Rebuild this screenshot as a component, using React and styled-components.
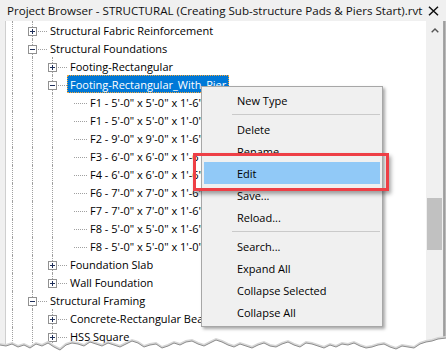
import styled, { createGlobalStyle } from 'styled-components';

const GlobalStyle = createGlobalStyle`
  html, body {
    margin: 0;
    padding: 0;
    background: #ffffff;
  }
  body {
    font-family: "Open Sans", "Noto Sans", sans-serif;
    font-size: 11px;
    color: #000;
  }
`;

const Window = styled.div`
  position: relative;
  width: 446px;
  height: 359px;
  overflow: hidden;
  background: #f0f0f0;
  display: flex;
  flex-direction: column;
`;

const TitleBar = styled.div`
  height: 21px;
  flex: none;
  display: flex;
  align-items: center;
  gap: 4px;
  padding: 0 7px;
  color: #111;
`;

const Title = styled.span`
  flex: 1;
  font-size: 11.6px;
  white-space: nowrap;
`;

const Body = styled.div`
  flex: 1;
  display: flex;
  min-height: 0;
`;

const LeftFrame = styled.div`
  width: 5px;
  flex: none;
  background: #f0f0f0;
  border-right: 1px solid #cfcfcf;
`;

const Tree = styled.div`
  flex: 1;
  background: #ffffff;
  overflow: hidden;
`;

const Scrollbar = styled.div`
  width: 17px;
  flex: none;
  background: #f0f0f0;
  display: flex;
  flex-direction: column;
  align-items: center;
`;

const ArrowButton = styled.div`
  height: 18px;
  width: 17px;
  display: flex;
  align-items: center;
  justify-content: center;
`;

const Thumb = styled.div`
  width: 15px;
  height: ${p => p.$height}px;
  margin-top: ${p => p.$top}px;
  background: #c1c1c1;
`;

const RightEdge = styled.div`
  width: 3px;
  flex: none;
  background: linear-gradient(to right, #a9a9a9, #9a9a9a 66%, #d8d8d8);
`;

const Row = styled.div`
  height: 18px;
  display: flex;
  white-space: nowrap;
`;

const Guide = styled.div`
  width: 20px;
  flex: none;
  position: relative;
  &::before {
    content: '';
    position: absolute;
    left: 6px;
    top: 0;
    bottom: 0;
    border-left: 1px dotted #a0a0a0;
    display: ${p => (p.$on ? 'block' : 'none')};
  }
`;

const Connector = styled.div`
  width: 21px;
  flex: none;
  position: relative;
  &::before {
    content: '';
    position: absolute;
    left: 6px;
    top: 0;
    height: ${p => (p.$kind === 'end' ? '10px' : '18px')};
    border-left: 1px dotted #a0a0a0;
    display: ${p => (p.$kind === 'none' ? 'none' : 'block')};
  }
  &::after {
    content: '';
    position: absolute;
    left: 8px;
    right: 0;
    top: 10px;
    border-top: 1px dotted #a0a0a0;
  }
`;

const Expander = styled.span`
  position: absolute;
  left: 2px;
  top: 6px;
  width: 9px;
  height: 9px;
  box-sizing: border-box;
  border: 1px solid #919191;
  background: #ffffff;
  z-index: 1;
  &::before {
    content: '';
    position: absolute;
    left: 1px;
    top: 3px;
    width: 5px;
    height: 1px;
    background: #1f2f5a;
  }
  &::after {
    content: '';
    position: absolute;
    left: 3px;
    top: 1px;
    width: 1px;
    height: 5px;
    background: #1f2f5a;
    display: ${p => (p.$open ? 'none' : 'block')};
  }
`;

const Label = styled.span`
  display: flex;
  align-items: center;
  height: 18px;
  padding: 0 3px;
  box-sizing: border-box;
  background: ${p => (p.$selected ? '#0078d7' : 'transparent')};
  color: ${p => (p.$selected ? '#ffffff' : '#000000')};
  outline: ${p => (p.$selected ? '1px dotted #f7a83a' : 'none')};
  outline-offset: -1px;
`;

const Menu = styled.div`
  position: absolute;
  left: 201px;
  top: 86px;
  width: 182px;
  box-sizing: border-box;
  padding: 2px 0 3px;
  background: #f0f0f0;
  border: 1px solid #a7a7a7;
  box-shadow: 2px 2px 3px rgba(0, 0, 0, 0.35);
  z-index: 5;
`;

const MenuItem = styled.div`
  height: 22px;
  margin: 0 2px;
  padding-left: 33px;
  display: flex;
  align-items: center;
  background: ${p => (p.$active ? '#91c9f7' : 'transparent')};
`;

const Separator = styled.div`
  height: 7px;
  margin: 0 2px 0 30px;
  display: flex;
  align-items: center;
  &::before {
    content: '';
    flex: 1;
    border-top: 1px solid #cacaca;
  }
`;

const Callout = styled.div`
  position: absolute;
  left: 193px;
  top: 153px;
  width: 196px;
  height: 38px;
  box-sizing: border-box;
  border: 3px solid #ee3f46;
  box-shadow: 2px 3px 4px rgba(0, 0, 0, 0.35);
  z-index: 6;
`;

const TornEdge = styled.svg`
  position: absolute;
  left: 0;
  bottom: 0;
  z-index: 8;
`;

const rows = [
  { guides: [1], conn: 'tee', box: 'plus', label: 'Structural Fabric Reinforcement' },
  { guides: [1], conn: 'tee', box: 'minus', label: 'Structural Foundations' },
  { guides: [1, 1], conn: 'tee', box: 'plus', label: 'Footing-Rectangular' },
  { guides: [1, 1], conn: 'tee', box: 'minus', label: 'Footing-Rectangular_With_Pier', selected: true },
  { guides: [1, 1, 1], conn: 'none', label: `F1 - 5'-0" x 5'-0" x 1'-6"` },
  { guides: [1, 1, 1], conn: 'none', label: `F1 - 5'-0" x 5'-0" x 1'-0"` },
  { guides: [1, 1, 1], conn: 'none', label: `F2 - 9'-0" x 9'-0" x 1'-6"` },
  { guides: [1, 1, 1], conn: 'none', label: `F3 - 6'-0" x 6'-0" x 1'-6"` },
  { guides: [1, 1, 1], conn: 'none', label: `F4 - 6'-0" x 6'-0" x 1'-6"` },
  { guides: [1, 1, 1], conn: 'none', label: `F6 - 7'-0" x 7'-0" x 1'-6"` },
  { guides: [1, 1, 1], conn: 'none', label: `F7 - 7'-0" x 7'-0" x 1'-6"` },
  { guides: [1, 1, 1], conn: 'none', label: `F8 - 5'-0" x 5'-0" x 1'-6"` },
  { guides: [1, 1, 1], conn: 'none', label: `F8 - 5'-0" x 5'-0" x 1'-0"` },
  { guides: [1, 1], conn: 'tee', box: 'plus', label: 'Foundation Slab' },
  { guides: [1, 1], conn: 'end', box: 'plus', label: 'Wall Foundation' },
  { guides: [1], conn: 'tee', box: 'minus', label: 'Structural Framing' },
  { guides: [1, 1], conn: 'tee', box: 'plus', label: 'Concrete-Rectangular Beam' },
  { guides: [1, 1], conn: 'tee', box: 'plus', label: 'HSS Square' },
  { guides: [1, 1], conn: 'tee', label: '' },
];

const menu = [
  'New Type', '-', 'Delete', 'Rename', 'Edit', 'Save...', 'Reload...', '-',
  'Search...', 'Expand All', 'Collapse Selected', 'Collapse All',
];

const wave = [
  [0, 10], [6, 11], [12, 9], [18, 12], [24, 10], [30, 13], [36, 9], [42, 11], [48, 8],
  [54, 12], [60, 15], [66, 10], [72, 8], [78, 9], [84, 11], [90, 7], [96, 9], [102, 11],
  [108, 8], [114, 10], [120, 12], [126, 9], [132, 6], [138, 8], [144, 12], [150, 10],
  [156, 9], [162, 13], [168, 11], [174, 8], [180, 10], [186, 7], [192, 6], [198, 9],
  [204, 11], [210, 8], [216, 5], [222, 7], [228, 10], [234, 12], [240, 9], [246, 11],
  [252, 13], [258, 10], [264, 8], [270, 11], [276, 12], [282, 9], [288, 7], [294, 10],
  [300, 12], [306, 8], [312, 9], [318, 11], [324, 13], [330, 10], [336, 12], [342, 9],
  [348, 10], [354, 8], [360, 11], [366, 13], [372, 12], [378, 10], [384, 9], [390, 12],
  [396, 14], [402, 11], [408, 12], [414, 13], [420, 9], [426, 7], [432, 6], [438, 4], [446, 3],
];

const CloseIcon = () => (
  <svg width="11" height="10" viewBox="0 0 11 10">
    <path d="M1 0.8 L10 9.2 M10 0.8 L1 9.2" stroke="#111" strokeWidth="1.5" fill="none" />
  </svg>
);

const UpChevron = () => (
  <svg width="8" height="5" viewBox="0 0 8 5">
    <path d="M0.7 4.3 L4 1 L7.3 4.3" stroke="#555" strokeWidth="1.4" fill="none" />
  </svg>
);

const App = () => {
  const line = wave.map(([x, y]) => `${x},${y}`).join(' ');
  return (
    <Window>
      <GlobalStyle />
      <TitleBar>
        <Title>Project Browser - STRUCTURAL (Creating Sub-structure Pads &amp; Piers Start).rvt</Title>
        <CloseIcon />
      </TitleBar>
      <Body>
        <LeftFrame />
        <Tree>
          {rows.map((r, i) => (
            <Row key={i}>
              {r.guides.map((g, j) => <Guide key={j} $on={!!g} />)}
              <Connector $kind={r.conn}>
                {r.box && <Expander $open={r.box === 'minus'} />}
              </Connector>
              {r.label && <Label $selected={r.selected}>{r.label}</Label>}
            </Row>
          ))}
        </Tree>
        <Scrollbar>
          <ArrowButton><UpChevron /></ArrowButton>
          <Thumb $top={159} $height={52} />
        </Scrollbar>
        <RightEdge />
      </Body>

      <Menu>
        {menu.map((m, i) =>
          m === '-' ? <Separator key={i} /> : <MenuItem key={i} $active={m === 'Edit'}>{m}</MenuItem>
        )}
      </Menu>
      <Callout />

      <TornEdge width="446" height="24" viewBox="0 0 446 24">
        <polygon points={`${line} 446,24 0,24`} fill="#ffffff" />
        <polyline points={line} fill="none" stroke="#d6d6d6" strokeWidth="2" transform="translate(0,-1)" />
        <polyline points={line} fill="none" stroke="#8e8e8e" strokeWidth="1" />
      </TornEdge>
    </Window>
  );
};

export default App;
